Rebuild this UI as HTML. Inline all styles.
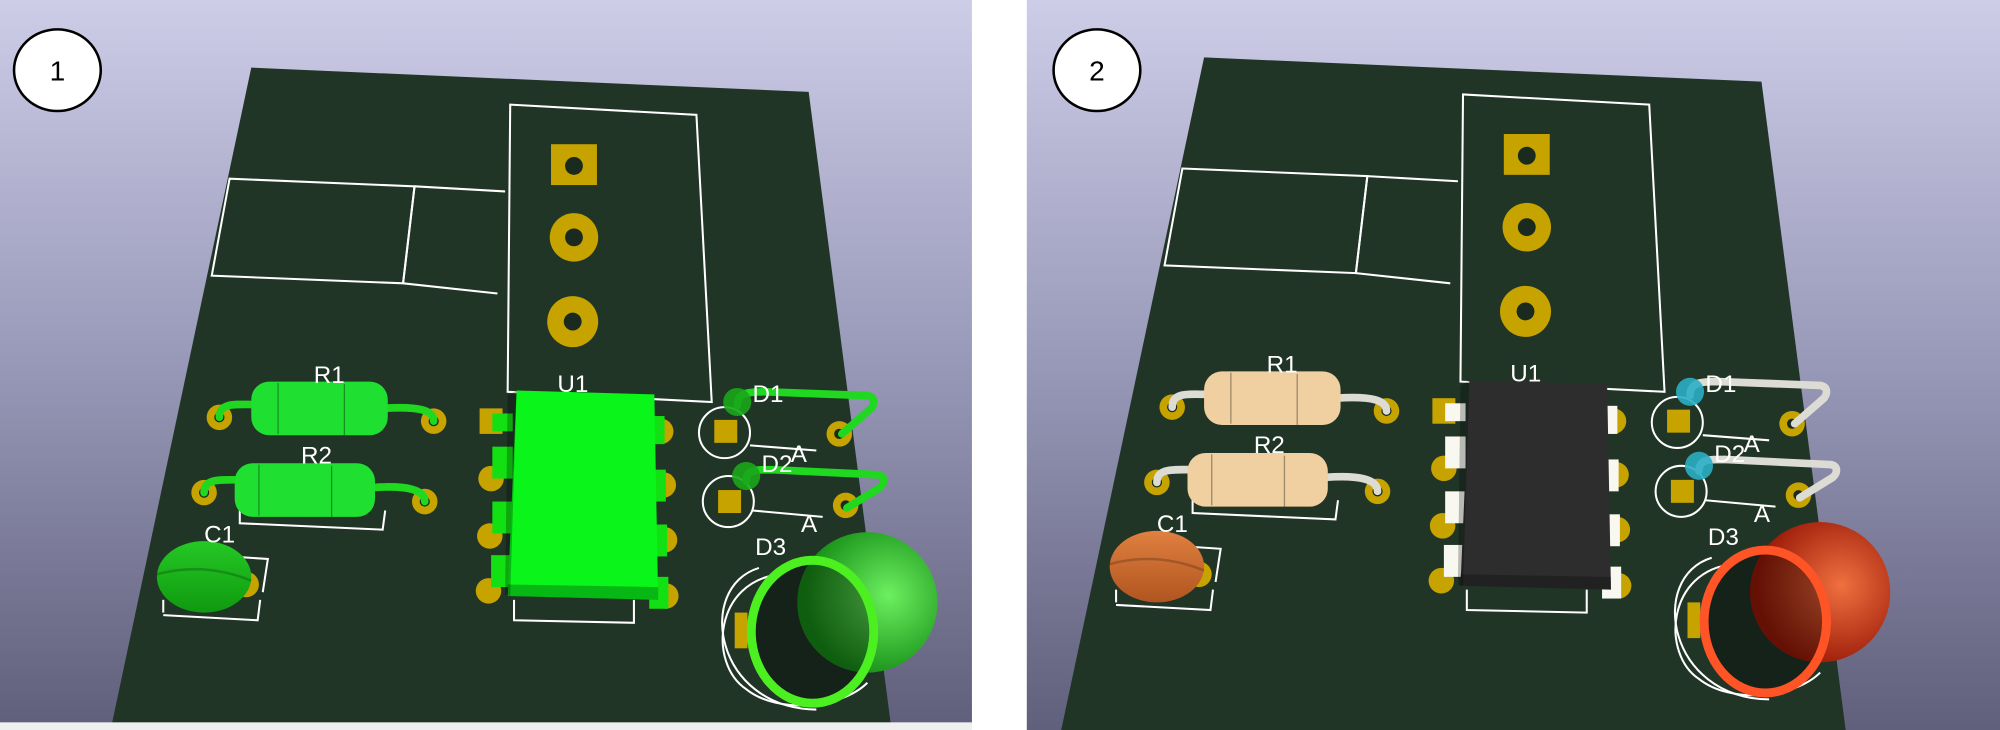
<!DOCTYPE html>
<html><head><meta charset="utf-8"><style>
html,body{margin:0;padding:0;background:#fff;width:2000px;height:730px;overflow:hidden}
svg{display:block}
text{font-family:"Liberation Sans",sans-serif;fill:#fff}
</style></head><body>
<svg width="2000" height="730" viewBox="0 0 1568 572" preserveAspectRatio="none" xmlns="http://www.w3.org/2000/svg">
<defs>
<linearGradient id="bg" x1="0" y1="0" x2="0" y2="1">
<stop offset="0" stop-color="#cdcde8"/><stop offset="0.5" stop-color="#9898b8"/><stop offset="1" stop-color="#60607c"/>
</linearGradient>
<radialGradient id="gd" cx="0.65" cy="0.45" r="0.6"><stop offset="0" stop-color="#6cf060"/><stop offset="1" stop-color="#178f17"/></radialGradient>
<radialGradient id="rd" cx="0.65" cy="0.45" r="0.6"><stop offset="0" stop-color="#f07040"/><stop offset="1" stop-color="#9a1a08"/></radialGradient>
<linearGradient id="gc" x1="0" y1="0" x2="0" y2="1"><stop offset="0" stop-color="#25c825"/><stop offset="1" stop-color="#0f9a0f"/></linearGradient>
<linearGradient id="oc" x1="0" y1="0" x2="0" y2="1"><stop offset="0" stop-color="#e08040"/><stop offset="1" stop-color="#b05520"/></linearGradient>
<symbol id="base" overflow="visible">
<polygon points="197,53 634,72 700,580 85,580" fill="#213527"/>
<g fill="none" stroke="#fff" stroke-width="1.6">
<polygon points="180,140 325,146 316,222 166,216"/>
<polyline points="325,146 396,150"/><polyline points="316,222 390,230"/><line x1="325" y1="146" x2="316" y2="222"/>
<polygon points="400,82 546,90 558,315 398,307"/>
<polyline points="200,312 200,322 302,326 300,312"/>
<polyline points="188,375 188,410 300,415 302,400"/>
<polyline points="180,436 210,438 206,464"/><polyline points="128,480 128,470"/><polyline points="128,482 202,486 204,470"/>
<polyline points="403,470 403,486 497,488 497,470"/>
<circle cx="568" cy="339" r="20"/><circle cx="571" cy="393" r="20"/>
<line x1="588" y1="349" x2="640" y2="353"/><line x1="590" y1="400" x2="645" y2="405"/>
<path d="M612,450 C560,455 555,520 585,540 C610,560 660,555 680,535"/>
<path d="M595,445 C545,460 560,555 640,556"/>
</g>
<rect x="432" y="113" width="36" height="32" fill="#c7a300"/>
<circle cx="450" cy="130" r="7" fill="#1a2a1f"/>
<circle cx="450" cy="186" r="19" fill="#c7a300"/><circle cx="450" cy="186" r="7" fill="#1a2a1f"/>
<circle cx="449" cy="252" r="20" fill="#c7a300"/><circle cx="449" cy="252" r="7" fill="#1a2a1f"/>
<g fill="#c7a300">
<circle cx="172" cy="327" r="10"/><circle cx="340" cy="330" r="10"/>
<circle cx="160" cy="386" r="10"/><circle cx="333" cy="393" r="10"/>
<circle cx="193" cy="458" r="10"/>
<rect x="376" y="320" width="18" height="20"/><circle cx="385" cy="375" r="10"/><circle cx="384" cy="420" r="10"/><circle cx="383" cy="463" r="10"/>
<circle cx="518" cy="338" r="10"/><circle cx="520" cy="380" r="10"/><circle cx="521" cy="423" r="10"/><circle cx="522" cy="467" r="10"/>
<rect x="560" y="329" width="18" height="18"/><rect x="563" y="384" width="18" height="18"/>
<circle cx="658" cy="340" r="10"/><circle cx="663" cy="396" r="10"/>
<rect x="576" y="480" width="10" height="28"/>
</g>
<g fill="#1a2a1f"><circle cx="172" cy="327" r="4"/><circle cx="340" cy="330" r="4"/><circle cx="160" cy="386" r="4"/><circle cx="333" cy="393" r="4"/><circle cx="658" cy="340" r="4"/><circle cx="663" cy="396" r="4"/></g>
</symbol>
<symbol id="parts" overflow="visible">
<g fill="none" style="stroke:var(--ld)" stroke-width="6" stroke-linecap="round" stroke-linejoin="round">
<path d="M172,327 C172,315 185,317 200,317"/><path d="M300,320 C330,318 340,322 340,330"/>
<path d="M160,386 C160,375 172,376 186,376"/><path d="M292,382 C320,380 333,384 333,393"/>
<path d="M578,318 C578,308 585,307 600,307 L680,310 C686,311 686,316 683,320 L660,340"/>
<path d="M585,377 C585,368 592,368 605,368 L688,372 C694,373 694,378 690,382 L664,398"/>
</g>
<g style="fill:var(--rb)">
<rect x="197" y="299" width="107" height="42" rx="14"/>
<rect x="184" y="363" width="110" height="42" rx="14"/>
</g>
<g fill="none" stroke="#000" stroke-opacity="0.35" stroke-width="1"><line x1="218" y1="300" x2="218" y2="340"/><line x1="270" y1="301" x2="270" y2="341"/><line x1="203" y1="364" x2="203" y2="404"/><line x1="260" y1="365" x2="260" y2="405"/></g>
<ellipse cx="160" cy="452" rx="37" ry="28" style="fill:var(--c1)"/>
<path d="M123,450 Q160,440 197,455" fill="none" stroke="#000" stroke-opacity="0.2" stroke-width="2"/>
<g style="fill:var(--pin)">
<rect x="386" y="324" width="16" height="14"/><rect x="386" y="350" width="16" height="25"/><rect x="386" y="393" width="16" height="25"/><rect x="385" y="435" width="16" height="25"/>
<rect x="507" y="326" width="14" height="22"/><rect x="507" y="368" width="15" height="25"/><rect x="508" y="411" width="15" height="25"/><rect x="509" y="452" width="15" height="25"/>
</g>
<polygon points="405,306 513,309 516,470 398,467" style="fill:var(--ic)"/>
<polygon points="398,458 516,460 516,470 398,467" fill="#000" opacity="0.25"/>
<polygon points="398,310 405,306 400,467 396,466" fill="#000" opacity="0.25"/>
<circle cx="578" cy="315" r="11" style="fill:var(--d)" opacity="0.9"/>
<circle cx="585" cy="373" r="11" style="fill:var(--d)" opacity="0.9"/>
<circle cx="680" cy="472" r="55" style="fill:var(--d3)"/>
<ellipse cx="637" cy="495" rx="48" ry="56" fill="#000" opacity="0.35"/>
<ellipse cx="637" cy="495" rx="48" ry="56" fill="none" style="stroke:var(--ring)" stroke-width="7"/>
</symbol>
</defs>
<rect x="0" y="0" width="762" height="567" fill="url(#bg)"/>
<rect x="805" y="0" width="763" height="572" fill="url(#bg)"/>
<svg x="0" y="0" width="762" height="567" overflow="hidden">
<use href="#base"/>
<use href="#parts" style="--ld:#1fd81f;--rb:#1fe030;--c1:url(#gc);--pin:#12e012;--ic:#0af51a;--d:#1aa61a;--d3:url(#gd);--ring:#4cf020"/>
<g font-size="19"><text x="246" y="300">R1</text><text x="236" y="363">R2</text><text x="160" y="425">C1</text><text x="437" y="307">U1</text>
<text x="590" y="315">D1</text><text x="597" y="370">D2</text><text x="620" y="362">A</text><text x="592" y="435">D3</text><text x="628" y="417">A</text></g>
</svg>
<rect x="0" y="566" width="762" height="6" fill="#eef0f0"/>
<svg x="805" y="0" width="763" height="572" overflow="hidden">
<g transform="translate(-58,-8)">
<use href="#base"/>
<use href="#parts" style="--ld:#dcdcd4;--rb:#f0cfa0;--c1:url(#oc);--pin:#f8f8f0;--ic:#2e2d2e;--d:#2aaec4;--d3:url(#rd);--ring:#ff5526"/>
<g font-size="19"><text x="246" y="300">R1</text><text x="236" y="363">R2</text><text x="160" y="425">C1</text><text x="437" y="307">U1</text>
<text x="590" y="315">D1</text><text x="597" y="370">D2</text><text x="620" y="362">A</text><text x="592" y="435">D3</text><text x="628" y="417">A</text></g>
</g>
</svg>
<ellipse cx="45" cy="55" rx="34" ry="32" fill="#fff" stroke="#000" stroke-width="2"/>
<text x="45" y="63" font-size="22" text-anchor="middle" style="fill:#000">1</text>
<ellipse cx="860" cy="55" rx="34" ry="32" fill="#fff" stroke="#000" stroke-width="2"/>
<text x="860" y="63" font-size="22" text-anchor="middle" style="fill:#000">2</text>
</svg>
</body></html>
